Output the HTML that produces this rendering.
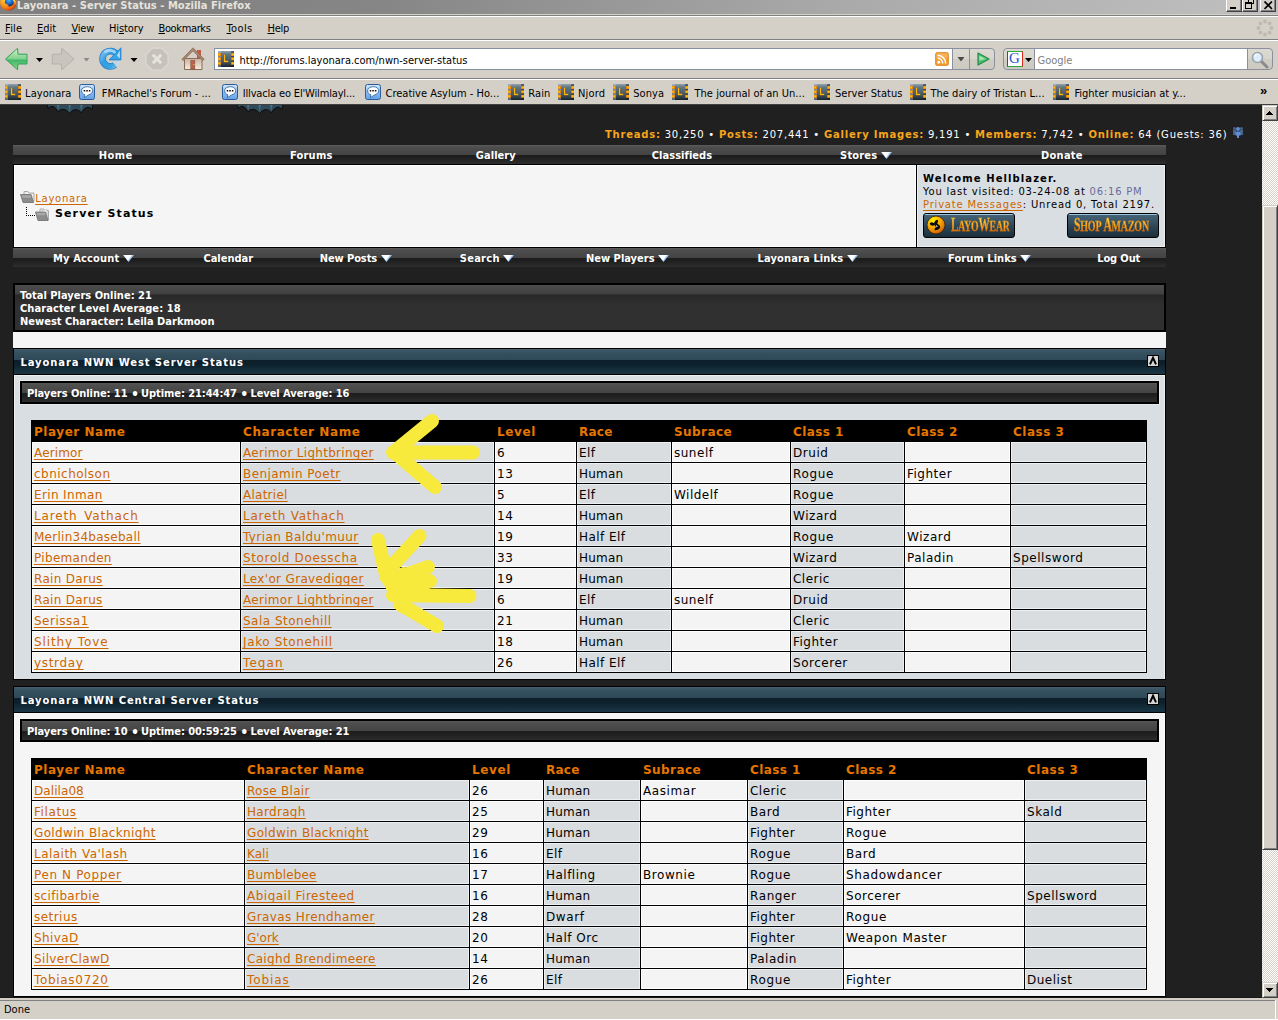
<!DOCTYPE html>
<html><head><meta charset="utf-8"><title>Layonara - Server Status - Mozilla Firefox</title>
<style>
*{box-sizing:border-box;margin:0;padding:0}
html,body{width:1278px;height:1020px;overflow:hidden;background:#d4d0c8}
body{position:relative;font-family:"DejaVu Sans","Liberation Sans",sans-serif;font-size:11px;color:#000}
.abs{position:absolute}
i{font-style:normal;display:block}
/* ---------- browser chrome ---------- */
#titlebar{left:0;top:0;width:1278px;height:14px;background:linear-gradient(90deg,#808080 0%,#868686 30%,#a9a9a9 65%,#c0c0c0 100%);overflow:hidden}
#titlebar span{position:absolute;left:17px;top:-1px;font:bold 11px "DejaVu Sans Condensed","Liberation Sans",sans-serif;color:#e6e3dc;letter-spacing:.05px;white-space:nowrap}
.ui{font-family:"DejaVu Sans Condensed","Liberation Sans",sans-serif;font-size:11px;color:#000;white-space:nowrap}
.hl{left:0;width:1278px;height:1px}
.menu{top:22px;line-height:13px}
.menu u{text-decoration:underline}
.bm{top:87px;line-height:13px}
.fav{width:16px;height:16px;top:84px}
#urlbar{left:214px;top:48px;width:739px;height:22px;background:#fff;border:1px solid #8790a0}
#page{left:0;top:105px;width:1262px;height:892px;background:#202020;overflow:hidden}
#status{left:0;top:998px;width:1278px;height:22px;background:#d4d0c8;border-bottom:1px solid #fff}
#scroll{left:1262px;top:105px;width:16px;height:893px;background:#e9e7e3;background-image:conic-gradient(#fff 25%,#d4d0c8 0 50%,#fff 0 75%,#d4d0c8 0);background-size:2px 2px}
.sbtn{left:0;width:16px;height:16px;background:#d4d0c8;border:1px solid;border-color:#d4d0c8 #404040 #404040 #d4d0c8;box-shadow:inset 1px 1px 0 #fff,inset -1px -1px 0 #808080}
.thumb{left:0;width:16px;background:#d4d0c8;border:1px solid;border-color:#d4d0c8 #404040 #404040 #d4d0c8;box-shadow:inset 1px 1px 0 #fff,inset -1px -1px 0 #808080}
.tri{position:absolute;left:4px;width:0;height:0;border-left:4px solid transparent;border-right:4px solid transparent}
.tri.up{top:5px;border-bottom:4px solid #000}
.tri.dn{top:6px;border-top:4px solid #000}
/* ---------- page ---------- */
.nav{left:13px;width:1153px;height:19px;background:linear-gradient(180deg,#5c5c5c 0,#4e4e4e 2px,#434343 10px,#1c1c1c 10px,#1f1f1f 13px,#2e2e2e 19px)}
.nav span{position:absolute;top:4px;font:bold 11px "DejaVu Sans Condensed","Liberation Sans",sans-serif;color:#fff;white-space:nowrap;line-height:13px}
.dd{display:inline-block;vertical-align:0}
.stats{font:10px "DejaVu Sans",sans-serif;color:#fff;white-space:nowrap}
.stats b{color:#f9a51b}
a{color:#cc6600;text-decoration:underline;text-decoration-thickness:1px;text-underline-offset:2px}
.shead{background:linear-gradient(180deg,#4d6573 0,#3e5868 1px,#35505f 4px,#2e4858 11px,#0b1e29 11px,#0e222e 16px,#16303f 22px,#1b3444 25px);border:1px solid #000}
.stitle{position:absolute;left:6.5px;top:7px;font:bold 10px "DejaVu Sans",sans-serif;letter-spacing:.9px;color:#fff;white-space:nowrap;line-height:13px}
.collapse{left:1133px;top:6px;width:12px;height:12px;background:#d6d6d6;border:1px solid #000}

.sbody{border:1px solid #000;border-top:0;box-shadow:inset 1px 1px 0 rgba(255,255,255,.5),inset -1px 0 0 rgba(255,255,255,.5)}
.subhead{border:2px solid #000;background:linear-gradient(180deg,#595959 0,#4e4e4e 2px,#444 10px,#1d1d1d 10px,#202020 13px,#2d2d2d 19px);box-shadow:0 0 0 1px rgba(255,255,255,.35)}
.subhead span{position:absolute;left:5px;top:4px;letter-spacing:-.03px;font:bold 11px "DejaVu Sans Condensed","Liberation Sans",sans-serif;color:#fff;white-space:nowrap;line-height:13px}
.dot{font-weight:bold}
.tbl{background:#000}
.th{height:20px;background:#000;color:#e67600;font:bold 12px "DejaVu Sans",sans-serif;padding:3px 0 0 2px;line-height:16px;white-space:nowrap;overflow:hidden}
.td{height:20px;font:12px "DejaVu Sans",sans-serif;padding:3px 0 0 2px;line-height:16px;white-space:nowrap;overflow:hidden;color:#000}
.a1{background:#f4f4f4;box-shadow:inset 0 0 0 1px #fff}
.a2{background:#d9dde0;box-shadow:inset 0 0 0 1px #edf0f3}
.wbtn{top:-3px;width:16px;height:15px;background:#d4d0c8;border:1px solid;border-color:#fff #404040 #404040 #fff;box-shadow:inset -1px -1px 0 #808080}
.lbtn{width:92px;height:25px;border:1px solid #000;border-radius:3px;background:linear-gradient(180deg,#9cc4e0 0,#9cc4e0 1px,#456275 1px,#3a5566 30%,#2a4252 60%,#1b303d 100%);overflow:hidden}
.fant{position:absolute;top:0px;font:bold 18px "Liberation Serif",serif;white-space:nowrap;line-height:22px;letter-spacing:-.3px;transform-origin:0 0;background:linear-gradient(180deg,#ffe25a 15%,#f9a81c 50%,#d96a06 85%);-webkit-background-clip:text;background-clip:text;color:transparent;-webkit-text-stroke:.3px #b8600a}
.fant small{font-size:15.5px}

</style></head><body>
<div id="titlebar" class="abs"><span>Layonara - Server Status - Mozilla Firefox</span>
<svg class="abs" style="left:0;top:-6px" width="17" height="17" viewBox="0 0 17 17"><radialGradient id="fx1" cx=".35" cy=".3" r=".8"><stop offset="0" stop-color="#ffd23a"/><stop offset=".5" stop-color="#fb9a1c"/><stop offset=".85" stop-color="#e4500e"/><stop offset="1" stop-color="#7a1c10"/></radialGradient><radialGradient id="fx2" cx=".45" cy=".3" r=".7"><stop offset="0" stop-color="#48b4f0"/><stop offset=".6" stop-color="#1a62c8"/><stop offset="1" stop-color="#08205c"/></radialGradient><circle cx="8.300" cy="8.500" r="8.200" fill="url(#fx1)"/><circle cx="9.300" cy="8" r="4.400" fill="url(#fx2)"/><path d="M3.500 9.500C5.500 9.200 7 9.800 9 11.200C7.600 11.300 7 11.800 6.800 12.600C5.200 12.400 4 11.400 3.500 9.500z" fill="#fb9a1c"/><path d="M12.800 4.500C15 5.500 16 8 15.600 10.500C15 8.500 14.200 7.500 13.300 7z" fill="#ffd23a"/></svg>
</div>
<div class="wbtn abs" style="left:1226px"><i class="abs" style="left:3px;top:9px;width:6px;height:2px;background:#000"></i></div>
<div class="wbtn abs" style="left:1242px"><i class="abs" style="left:5px;top:0px;width:6px;height:6px;border:1px solid #000;border-top-width:2px"></i><i class="abs" style="left:2px;top:4px;width:7px;height:7px;border:1px solid #000;border-top-width:2px;background:#d4d0c8"></i></div>
<div class="wbtn abs" style="left:1260px"><svg class="abs" style="left:3px;top:3px" width="9" height="9" viewBox="0 0 9 9"><path d="M0.500 0.500l7.500 7.500M8 0.500L0.500 8" stroke="#000" stroke-width="1.700"/></svg></div>
<i class="abs hl" style="top:15px;background:#808080"></i><i class="abs hl" style="top:16px;background:#fff"></i>
<i class="abs hl" style="top:39px;background:#808080"></i><i class="abs hl" style="top:40px;background:#fff"></i>
<i class="abs hl" style="top:78px;background:#808080"></i><i class="abs hl" style="top:79px;background:#fff"></i>
<i class="abs hl" style="top:104px;background:#404040"></i>
<span class="ui menu abs" style="left:5.1px;letter-spacing:0.129px"><u>F</u>ile</span>
<span class="ui menu abs" style="left:37.0px;letter-spacing:-0.043px"><u>E</u>dit</span>
<span class="ui menu abs" style="left:71.5px;letter-spacing:-0.242px"><u>V</u>iew</span>
<span class="ui menu abs" style="left:108.9px;letter-spacing:-0.1px">Hi<u>s</u>tory</span>
<span class="ui menu abs" style="left:158.5px;letter-spacing:-0.366px"><u>B</u>ookmarks</span>
<span class="ui menu abs" style="left:226.5px;letter-spacing:0.362px"><u>T</u>ools</span>
<span class="ui menu abs" style="left:267.5px;letter-spacing:-0.27px"><u>H</u>elp</span>
<svg class="abs" style="left:1256px;top:19px" width="18" height="18" viewBox="0 0 18 18"><g fill="#bdb9b1"><circle cx="15.50" cy="9.00" r="1.9"/><circle cx="13.60" cy="13.60" r="1.9"/><circle cx="9.00" cy="15.50" r="1.9"/><circle cx="4.40" cy="13.60" r="1.9"/><circle cx="2.50" cy="9.00" r="1.9"/><circle cx="4.40" cy="4.40" r="1.9"/><circle cx="9.00" cy="2.50" r="1.9"/><circle cx="13.60" cy="4.40" r="1.9"/></g></svg>
<svg class="abs" style="left:0;top:44px" width="212" height="30" viewBox="0 44 212 30">
<linearGradient id="gB" x1="0" y1="0" x2="0" y2="1"><stop offset="0" stop-color="#d5f3c8"/><stop offset=".5" stop-color="#7fd08a"/><stop offset=".55" stop-color="#3fb56c"/><stop offset="1" stop-color="#8fdc7a"/></linearGradient>
<linearGradient id="gR" x1="0" y1="0" x2="1" y2="1"><stop offset="0" stop-color="#9fd4f7"/><stop offset=".5" stop-color="#2f8fdc"/><stop offset="1" stop-color="#1e6fc4"/></linearGradient>
<linearGradient id="gH" x1="0" y1="0" x2="0" y2="1"><stop offset="0" stop-color="#c9b3a2"/><stop offset="1" stop-color="#f3ece2"/></linearGradient>
<path d="M5.500 59L17.500 48.300L18 54.200H27V64H18L17.500 69.700Z" fill="url(#gB)" stroke="#2ea25c" stroke-width="1" stroke-linejoin="round"/>
<path d="M36 58h7l-3.500 4z" fill="#000"/>
<path d="M74 59L61.800 48.300L61.300 54.200H52.300V64h9L61.800 69.700Z" fill="#c8c5be" stroke="#b4b1aa" stroke-width="1" stroke-linejoin="round"/>
<path d="M83.500 58h6l-3 3.500z" fill="#8a8a8a"/>
<linearGradient id="gR2" gradientUnits="userSpaceOnUse" x1="100" y1="52" x2="120" y2="68"><stop offset="0" stop-color="#8fcaf0"/><stop offset=".35" stop-color="#2f9fe2"/><stop offset=".7" stop-color="#3aa6e4"/><stop offset="1" stop-color="#cfe4ee" stop-opacity=".6"/></linearGradient>
<path d="M116.500 54.200A7.700 7.700 0 1 0 115 64.850" fill="none" stroke="#1f7bd0" stroke-width="6.800" opacity=".9"/>
<path d="M115 64.850A7.700 7.700 0 0 0 117.500 60.800" fill="none" stroke="#bcd9ea" stroke-width="6.400" opacity=".75"/>
<path d="M116.800 54.600A7.700 7.700 0 1 0 114.800 65" fill="none" stroke="url(#gR2)" stroke-width="5"/>
<path d="M104.500 52.500A7.700 7.700 0 0 1 116 53.500" fill="none" stroke="#b9e0f7" stroke-width="2.600" opacity=".8"/>
<path d="M120.900 47.800V59.900H109.100Z" fill="#36a6e6" stroke="#1f7bd0" stroke-width=".9" stroke-linejoin="round"/>
<path d="M119.800 50.800V58.600L117 55.500Z" fill="#c5e6f8" opacity=".9"/>
<path d="M130.500 58h7l-3.500 4z" fill="#000"/>
<path d="M152.400 48.200h9.200l6.400 6.400v9.200l-6.400 6.400h-9.200l-6.400-6.400v-9.200z" fill="#c5c2bb" stroke="#dddad3" stroke-width="1.200"/>
<path d="M152.800 54.800l8.400 8.400M161.200 54.800l-8.400 8.400" stroke="#e6e3dc" stroke-width="3"/>
<rect x="197" y="50" width="4" height="8" fill="#c45a43"/>
<path d="M184.500 58.500h17.500v11H184.500z" fill="url(#gH)" stroke="#8a6a50" stroke-width="1"/>
<path d="M193 47.800L181.800 59.300L183.300 60.500L193 50.800L202.700 60.500L204.200 59.300Z" fill="#a88874" stroke="#8b6b57" stroke-width=".8" stroke-linejoin="round"/>
<rect x="190.800" y="60.500" width="4" height="8.500" fill="#b8634b" stroke="#8e4a38" stroke-width=".6"/>
<rect x="193.500" y="64" width="1" height="1" fill="#e8e84a"/>
</svg>
<div id="urlbar" class="abs"><span class="ui abs" style="left:24.500px;top:5px;line-height:13px;letter-spacing:0.006px">http://forums.layonara.com/nwn-server-status</span></div>
<svg class="abs" style="left:218px;top:51px" width="16" height="16" viewBox="0 0 16 16"><linearGradient id="fv1" x1="0" y1="0" x2="0" y2="1"><stop offset="0" stop-color="#93a2ad"/><stop offset=".2" stop-color="#647582"/><stop offset=".7" stop-color="#44545f"/><stop offset="1" stop-color="#17232d"/></linearGradient><rect x="0" y="0" width="16" height="16" fill="url(#fv1)"/><rect x="13" y="0" width="3" height="16" fill="#101a24" opacity=".45"/><rect x="0" y="0" width="3" height="16" fill="#c5d6e2" opacity=".35"/><path d="M6.800 4v7h3.400" fill="none" stroke="#1c2a38" stroke-width="2.600" opacity=".5"/><path d="M6.600 3.800v6.800h3.600" fill="none" stroke="#ffb606" stroke-width="1.500"/><rect x="0" y="2" width="3" height="3" fill="#e07a08"/><rect x="0.2" y="2.6" width="2" height="1.800" fill="#ffc40a"/><rect x="0" y="6.3" width="3" height="3" fill="#e07a08"/><rect x="0.2" y="6.8999999999999995" width="2" height="1.800" fill="#ffc40a"/><rect x="0" y="10.8" width="3" height="3" fill="#e07a08"/><rect x="0.2" y="11.4" width="2" height="1.800" fill="#ffc40a"/><rect x="13" y="2" width="3" height="3" fill="#e07a08"/><rect x="13.8" y="2.6" width="2" height="1.800" fill="#ffc40a"/><rect x="13" y="6.3" width="3" height="3" fill="#e07a08"/><rect x="13.8" y="6.8999999999999995" width="2" height="1.800" fill="#ffc40a"/><rect x="13" y="10.8" width="3" height="3" fill="#e07a08"/><rect x="13.8" y="11.4" width="2" height="1.800" fill="#ffc40a"/></svg>
<svg class="abs" style="left:935px;top:52px" width="14" height="14" viewBox="0 0 16 16"><rect x=".5" y=".5" width="15" height="15" rx="2.500" fill="#f39a2c" stroke="#e08a2a"/><rect x="1.500" y="1.500" width="13" height="6" rx="2" fill="#f9b868" opacity=".7"/><circle cx="4.300" cy="11.700" r="1.600" fill="#fff"/><path d="M3 7.200a5.800 5.800 0 0 1 5.800 5.800M3 3.800A9.200 9.200 0 0 1 12.200 13" fill="none" stroke="#fff" stroke-width="1.800"/></svg>
<div class="abs" style="left:952px;top:48px;width:18px;height:22px;border:1px solid #8a90a0;background:linear-gradient(180deg,#dcd9d1 0,#d8d5cd 50%,#cfccc4 50%,#cdcac2 100%)"></div>
<svg class="abs" style="left:957px;top:57px" width="8" height="5" viewBox="0 0 8 5"><path d="M0.500 0h7L4 4.600z" fill="#4a4a4a"/></svg>
<div class="abs" style="left:969px;top:48px;width:26px;height:22px;border:1px solid #8a90a0;border-radius:0 4px 4px 0;background:linear-gradient(180deg,#dcd9d1 0,#d8d5cd 50%,#cfccc4 50%,#cdcac2 100%)"></div>
<svg class="abs" style="left:976px;top:52px" width="14" height="14" viewBox="0 0 14 14"><path d="M2 1L13 7L2 13Z" fill="#4fbf70" stroke="#1f8f45" stroke-width="1.200" stroke-linejoin="round"/><path d="M3.300 3.500L9.800 7L3.300 8.500z" fill="#a5e5b0"/></svg>
<div class="abs" style="left:1003px;top:48px;width:270px;height:22px;border:1px solid #8a90a0;border-radius:4px;background:linear-gradient(180deg,#dcd9d1 0,#d8d5cd 50%,#cfccc4 50%,#cdcac2 100%)"></div>
<div class="abs" style="left:1034px;top:48px;width:214px;height:22px;border:1px solid #8a90a0;background:#fff"><span class="ui abs" style="left:2.500px;top:5px;line-height:13px;color:#808080">Google</span></div>
<div class="abs" style="left:1007px;top:51px;width:16px;height:16px;background:#fff;border:1px solid;border-color:#2fa83a #d8281e #2fa83a #2448d8"><span class="abs" style="left:1px;top:-2px;font:15px 'Liberation Serif',serif;color:#2a4fd0;line-height:16px">G</span></div>
<svg class="abs" style="left:1025px;top:58px" width="7" height="4" viewBox="0 0 7 4"><path d="M0 0h7L3.500 4z" fill="#000"/></svg>
<svg class="abs" style="left:1251px;top:51px" width="18" height="18" viewBox="0 0 18 18"><path d="M10 10l6 6" stroke="#8a8a8a" stroke-width="3" stroke-linecap="round"/><circle cx="6.500" cy="6.500" r="5" fill="#dfeefa" stroke="#9aa4ae" stroke-width="1.600"/><path d="M3.500 5.500a3.500 3.500 0 0 1 3-2.500" stroke="#fff" stroke-width="1.200" fill="none"/></svg>
<svg class="abs" style="left:5px;top:84px" width="16" height="16" viewBox="0 0 16 16"><linearGradient id="fv2" x1="0" y1="0" x2="0" y2="1"><stop offset="0" stop-color="#93a2ad"/><stop offset=".2" stop-color="#647582"/><stop offset=".7" stop-color="#44545f"/><stop offset="1" stop-color="#17232d"/></linearGradient><rect x="0" y="0" width="16" height="16" fill="url(#fv2)"/><rect x="13" y="0" width="3" height="16" fill="#101a24" opacity=".45"/><rect x="0" y="0" width="3" height="16" fill="#c5d6e2" opacity=".35"/><path d="M6.800 4v7h3.400" fill="none" stroke="#1c2a38" stroke-width="2.600" opacity=".5"/><path d="M6.600 3.800v6.800h3.600" fill="none" stroke="#ffb606" stroke-width="1.500"/><rect x="0" y="2" width="3" height="3" fill="#e07a08"/><rect x="0.2" y="2.6" width="2" height="1.800" fill="#ffc40a"/><rect x="0" y="6.3" width="3" height="3" fill="#e07a08"/><rect x="0.2" y="6.8999999999999995" width="2" height="1.800" fill="#ffc40a"/><rect x="0" y="10.8" width="3" height="3" fill="#e07a08"/><rect x="0.2" y="11.4" width="2" height="1.800" fill="#ffc40a"/><rect x="13" y="2" width="3" height="3" fill="#e07a08"/><rect x="13.8" y="2.6" width="2" height="1.800" fill="#ffc40a"/><rect x="13" y="6.3" width="3" height="3" fill="#e07a08"/><rect x="13.8" y="6.8999999999999995" width="2" height="1.800" fill="#ffc40a"/><rect x="13" y="10.8" width="3" height="3" fill="#e07a08"/><rect x="13.8" y="11.4" width="2" height="1.800" fill="#ffc40a"/></svg>
<span class="ui bm abs" style="left:25.1px;letter-spacing:0.056px">Layonara</span>
<svg class="abs" style="left:79px;top:84px" width="16" height="16" viewBox="0 0 16 16"><linearGradient id="bb1" x1="0" y1="0" x2="0" y2="1"><stop offset="0" stop-color="#d4e8fb"/><stop offset=".45" stop-color="#8fc0f2"/><stop offset="1" stop-color="#62a2e8"/></linearGradient><rect x="0.500" y="0.500" width="15" height="15" rx="2" fill="url(#bb1)" stroke="#2a5c98"/><path d="M8.300 2.700c3.200 0 5.400 1.800 5.400 4.100 0 1.900-1.700 3.400-4.300 4.200L5.300 13.700l.6-2.900C3.700 10.100 2.600 8.600 2.600 6.800c0-2.300 2.400-4.100 5.700-4.100z" fill="#fff" stroke="#2a5c98" stroke-width=".8"/><g fill="#0a0a0a"><rect x="4.600" y="6.100" width="1.700" height="1.500" rx=".5"/><rect x="7.200" y="6.100" width="1.700" height="1.500" rx=".5"/><rect x="9.800" y="6.100" width="1.700" height="1.500" rx=".5"/></g></svg>
<span class="ui bm abs" style="left:101.8px;letter-spacing:-0.006px">FMRachel's Forum - ...</span>
<svg class="abs" style="left:222px;top:84px" width="16" height="16" viewBox="0 0 16 16"><linearGradient id="bb2" x1="0" y1="0" x2="0" y2="1"><stop offset="0" stop-color="#d4e8fb"/><stop offset=".45" stop-color="#8fc0f2"/><stop offset="1" stop-color="#62a2e8"/></linearGradient><rect x="0.500" y="0.500" width="15" height="15" rx="2" fill="url(#bb2)" stroke="#2a5c98"/><path d="M8.300 2.700c3.200 0 5.400 1.800 5.400 4.100 0 1.900-1.700 3.400-4.300 4.200L5.300 13.700l.6-2.900C3.700 10.100 2.600 8.600 2.600 6.800c0-2.300 2.400-4.100 5.700-4.100z" fill="#fff" stroke="#2a5c98" stroke-width=".8"/><g fill="#0a0a0a"><rect x="4.600" y="6.100" width="1.700" height="1.500" rx=".5"/><rect x="7.200" y="6.100" width="1.700" height="1.500" rx=".5"/><rect x="9.800" y="6.100" width="1.700" height="1.500" rx=".5"/></g></svg>
<span class="ui bm abs" style="left:242.7px;letter-spacing:-0.157px">Illvacla eo El'Wilmlayl...</span>
<svg class="abs" style="left:365px;top:84px" width="16" height="16" viewBox="0 0 16 16"><linearGradient id="bb3" x1="0" y1="0" x2="0" y2="1"><stop offset="0" stop-color="#d4e8fb"/><stop offset=".45" stop-color="#8fc0f2"/><stop offset="1" stop-color="#62a2e8"/></linearGradient><rect x="0.500" y="0.500" width="15" height="15" rx="2" fill="url(#bb3)" stroke="#2a5c98"/><path d="M8.300 2.700c3.200 0 5.400 1.800 5.400 4.100 0 1.900-1.700 3.400-4.300 4.200L5.300 13.700l.6-2.900C3.700 10.100 2.600 8.600 2.600 6.800c0-2.300 2.400-4.100 5.700-4.100z" fill="#fff" stroke="#2a5c98" stroke-width=".8"/><g fill="#0a0a0a"><rect x="4.600" y="6.100" width="1.700" height="1.500" rx=".5"/><rect x="7.200" y="6.100" width="1.700" height="1.500" rx=".5"/><rect x="9.800" y="6.100" width="1.700" height="1.500" rx=".5"/></g></svg>
<span class="ui bm abs" style="left:385.5px;letter-spacing:0.007px">Creative Asylum - Ho...</span>
<svg class="abs" style="left:508px;top:84px" width="16" height="16" viewBox="0 0 16 16"><linearGradient id="fv3" x1="0" y1="0" x2="0" y2="1"><stop offset="0" stop-color="#93a2ad"/><stop offset=".2" stop-color="#647582"/><stop offset=".7" stop-color="#44545f"/><stop offset="1" stop-color="#17232d"/></linearGradient><rect x="0" y="0" width="16" height="16" fill="url(#fv3)"/><rect x="13" y="0" width="3" height="16" fill="#101a24" opacity=".45"/><rect x="0" y="0" width="3" height="16" fill="#c5d6e2" opacity=".35"/><path d="M6.800 4v7h3.400" fill="none" stroke="#1c2a38" stroke-width="2.600" opacity=".5"/><path d="M6.600 3.800v6.800h3.600" fill="none" stroke="#ffb606" stroke-width="1.500"/><rect x="0" y="2" width="3" height="3" fill="#e07a08"/><rect x="0.2" y="2.6" width="2" height="1.800" fill="#ffc40a"/><rect x="0" y="6.3" width="3" height="3" fill="#e07a08"/><rect x="0.2" y="6.8999999999999995" width="2" height="1.800" fill="#ffc40a"/><rect x="0" y="10.8" width="3" height="3" fill="#e07a08"/><rect x="0.2" y="11.4" width="2" height="1.800" fill="#ffc40a"/><rect x="13" y="2" width="3" height="3" fill="#e07a08"/><rect x="13.8" y="2.6" width="2" height="1.800" fill="#ffc40a"/><rect x="13" y="6.3" width="3" height="3" fill="#e07a08"/><rect x="13.8" y="6.8999999999999995" width="2" height="1.800" fill="#ffc40a"/><rect x="13" y="10.8" width="3" height="3" fill="#e07a08"/><rect x="13.8" y="11.4" width="2" height="1.800" fill="#ffc40a"/></svg>
<span class="ui bm abs" style="left:528.2px;letter-spacing:0.141px">Rain</span>
<svg class="abs" style="left:558px;top:84px" width="16" height="16" viewBox="0 0 16 16"><linearGradient id="fv4" x1="0" y1="0" x2="0" y2="1"><stop offset="0" stop-color="#93a2ad"/><stop offset=".2" stop-color="#647582"/><stop offset=".7" stop-color="#44545f"/><stop offset="1" stop-color="#17232d"/></linearGradient><rect x="0" y="0" width="16" height="16" fill="url(#fv4)"/><rect x="13" y="0" width="3" height="16" fill="#101a24" opacity=".45"/><rect x="0" y="0" width="3" height="16" fill="#c5d6e2" opacity=".35"/><path d="M6.800 4v7h3.400" fill="none" stroke="#1c2a38" stroke-width="2.600" opacity=".5"/><path d="M6.600 3.800v6.800h3.600" fill="none" stroke="#ffb606" stroke-width="1.500"/><rect x="0" y="2" width="3" height="3" fill="#e07a08"/><rect x="0.2" y="2.6" width="2" height="1.800" fill="#ffc40a"/><rect x="0" y="6.3" width="3" height="3" fill="#e07a08"/><rect x="0.2" y="6.8999999999999995" width="2" height="1.800" fill="#ffc40a"/><rect x="0" y="10.8" width="3" height="3" fill="#e07a08"/><rect x="0.2" y="11.4" width="2" height="1.800" fill="#ffc40a"/><rect x="13" y="2" width="3" height="3" fill="#e07a08"/><rect x="13.8" y="2.6" width="2" height="1.800" fill="#ffc40a"/><rect x="13" y="6.3" width="3" height="3" fill="#e07a08"/><rect x="13.8" y="6.8999999999999995" width="2" height="1.800" fill="#ffc40a"/><rect x="13" y="10.8" width="3" height="3" fill="#e07a08"/><rect x="13.8" y="11.4" width="2" height="1.800" fill="#ffc40a"/></svg>
<span class="ui bm abs" style="left:578.0px;letter-spacing:0.185px">Njord</span>
<svg class="abs" style="left:613px;top:84px" width="16" height="16" viewBox="0 0 16 16"><linearGradient id="fv5" x1="0" y1="0" x2="0" y2="1"><stop offset="0" stop-color="#93a2ad"/><stop offset=".2" stop-color="#647582"/><stop offset=".7" stop-color="#44545f"/><stop offset="1" stop-color="#17232d"/></linearGradient><rect x="0" y="0" width="16" height="16" fill="url(#fv5)"/><rect x="13" y="0" width="3" height="16" fill="#101a24" opacity=".45"/><rect x="0" y="0" width="3" height="16" fill="#c5d6e2" opacity=".35"/><path d="M6.800 4v7h3.400" fill="none" stroke="#1c2a38" stroke-width="2.600" opacity=".5"/><path d="M6.600 3.800v6.800h3.600" fill="none" stroke="#ffb606" stroke-width="1.500"/><rect x="0" y="2" width="3" height="3" fill="#e07a08"/><rect x="0.2" y="2.6" width="2" height="1.800" fill="#ffc40a"/><rect x="0" y="6.3" width="3" height="3" fill="#e07a08"/><rect x="0.2" y="6.8999999999999995" width="2" height="1.800" fill="#ffc40a"/><rect x="0" y="10.8" width="3" height="3" fill="#e07a08"/><rect x="0.2" y="11.4" width="2" height="1.800" fill="#ffc40a"/><rect x="13" y="2" width="3" height="3" fill="#e07a08"/><rect x="13.8" y="2.6" width="2" height="1.800" fill="#ffc40a"/><rect x="13" y="6.3" width="3" height="3" fill="#e07a08"/><rect x="13.8" y="6.8999999999999995" width="2" height="1.800" fill="#ffc40a"/><rect x="13" y="10.8" width="3" height="3" fill="#e07a08"/><rect x="13.8" y="11.4" width="2" height="1.800" fill="#ffc40a"/></svg>
<span class="ui bm abs" style="left:633.2px;letter-spacing:0.074px">Sonya</span>
<svg class="abs" style="left:672px;top:84px" width="16" height="16" viewBox="0 0 16 16"><linearGradient id="fv6" x1="0" y1="0" x2="0" y2="1"><stop offset="0" stop-color="#93a2ad"/><stop offset=".2" stop-color="#647582"/><stop offset=".7" stop-color="#44545f"/><stop offset="1" stop-color="#17232d"/></linearGradient><rect x="0" y="0" width="16" height="16" fill="url(#fv6)"/><rect x="13" y="0" width="3" height="16" fill="#101a24" opacity=".45"/><rect x="0" y="0" width="3" height="16" fill="#c5d6e2" opacity=".35"/><path d="M6.800 4v7h3.400" fill="none" stroke="#1c2a38" stroke-width="2.600" opacity=".5"/><path d="M6.600 3.800v6.800h3.600" fill="none" stroke="#ffb606" stroke-width="1.500"/><rect x="0" y="2" width="3" height="3" fill="#e07a08"/><rect x="0.2" y="2.6" width="2" height="1.800" fill="#ffc40a"/><rect x="0" y="6.3" width="3" height="3" fill="#e07a08"/><rect x="0.2" y="6.8999999999999995" width="2" height="1.800" fill="#ffc40a"/><rect x="0" y="10.8" width="3" height="3" fill="#e07a08"/><rect x="0.2" y="11.4" width="2" height="1.800" fill="#ffc40a"/><rect x="13" y="2" width="3" height="3" fill="#e07a08"/><rect x="13.8" y="2.6" width="2" height="1.800" fill="#ffc40a"/><rect x="13" y="6.3" width="3" height="3" fill="#e07a08"/><rect x="13.8" y="6.8999999999999995" width="2" height="1.800" fill="#ffc40a"/><rect x="13" y="10.8" width="3" height="3" fill="#e07a08"/><rect x="13.8" y="11.4" width="2" height="1.800" fill="#ffc40a"/></svg>
<span class="ui bm abs" style="left:694.5px;letter-spacing:0.021px">The journal of an Un...</span>
<svg class="abs" style="left:814px;top:84px" width="16" height="16" viewBox="0 0 16 16"><linearGradient id="fv7" x1="0" y1="0" x2="0" y2="1"><stop offset="0" stop-color="#93a2ad"/><stop offset=".2" stop-color="#647582"/><stop offset=".7" stop-color="#44545f"/><stop offset="1" stop-color="#17232d"/></linearGradient><rect x="0" y="0" width="16" height="16" fill="url(#fv7)"/><rect x="13" y="0" width="3" height="16" fill="#101a24" opacity=".45"/><rect x="0" y="0" width="3" height="16" fill="#c5d6e2" opacity=".35"/><path d="M6.800 4v7h3.400" fill="none" stroke="#1c2a38" stroke-width="2.600" opacity=".5"/><path d="M6.600 3.800v6.800h3.600" fill="none" stroke="#ffb606" stroke-width="1.500"/><rect x="0" y="2" width="3" height="3" fill="#e07a08"/><rect x="0.2" y="2.6" width="2" height="1.800" fill="#ffc40a"/><rect x="0" y="6.3" width="3" height="3" fill="#e07a08"/><rect x="0.2" y="6.8999999999999995" width="2" height="1.800" fill="#ffc40a"/><rect x="0" y="10.8" width="3" height="3" fill="#e07a08"/><rect x="0.2" y="11.4" width="2" height="1.800" fill="#ffc40a"/><rect x="13" y="2" width="3" height="3" fill="#e07a08"/><rect x="13.8" y="2.6" width="2" height="1.800" fill="#ffc40a"/><rect x="13" y="6.3" width="3" height="3" fill="#e07a08"/><rect x="13.8" y="6.8999999999999995" width="2" height="1.800" fill="#ffc40a"/><rect x="13" y="10.8" width="3" height="3" fill="#e07a08"/><rect x="13.8" y="11.4" width="2" height="1.800" fill="#ffc40a"/></svg>
<span class="ui bm abs" style="left:835.0px;letter-spacing:0.028px">Server Status</span>
<svg class="abs" style="left:910px;top:84px" width="16" height="16" viewBox="0 0 16 16"><linearGradient id="fv8" x1="0" y1="0" x2="0" y2="1"><stop offset="0" stop-color="#93a2ad"/><stop offset=".2" stop-color="#647582"/><stop offset=".7" stop-color="#44545f"/><stop offset="1" stop-color="#17232d"/></linearGradient><rect x="0" y="0" width="16" height="16" fill="url(#fv8)"/><rect x="13" y="0" width="3" height="16" fill="#101a24" opacity=".45"/><rect x="0" y="0" width="3" height="16" fill="#c5d6e2" opacity=".35"/><path d="M6.800 4v7h3.400" fill="none" stroke="#1c2a38" stroke-width="2.600" opacity=".5"/><path d="M6.600 3.800v6.800h3.600" fill="none" stroke="#ffb606" stroke-width="1.500"/><rect x="0" y="2" width="3" height="3" fill="#e07a08"/><rect x="0.2" y="2.6" width="2" height="1.800" fill="#ffc40a"/><rect x="0" y="6.3" width="3" height="3" fill="#e07a08"/><rect x="0.2" y="6.8999999999999995" width="2" height="1.800" fill="#ffc40a"/><rect x="0" y="10.8" width="3" height="3" fill="#e07a08"/><rect x="0.2" y="11.4" width="2" height="1.800" fill="#ffc40a"/><rect x="13" y="2" width="3" height="3" fill="#e07a08"/><rect x="13.8" y="2.6" width="2" height="1.800" fill="#ffc40a"/><rect x="13" y="6.3" width="3" height="3" fill="#e07a08"/><rect x="13.8" y="6.8999999999999995" width="2" height="1.800" fill="#ffc40a"/><rect x="13" y="10.8" width="3" height="3" fill="#e07a08"/><rect x="13.8" y="11.4" width="2" height="1.800" fill="#ffc40a"/></svg>
<span class="ui bm abs" style="left:930.4px;letter-spacing:0.045px">The dairy of Tristan L...</span>
<svg class="abs" style="left:1053px;top:84px" width="16" height="16" viewBox="0 0 16 16"><linearGradient id="fv9" x1="0" y1="0" x2="0" y2="1"><stop offset="0" stop-color="#93a2ad"/><stop offset=".2" stop-color="#647582"/><stop offset=".7" stop-color="#44545f"/><stop offset="1" stop-color="#17232d"/></linearGradient><rect x="0" y="0" width="16" height="16" fill="url(#fv9)"/><rect x="13" y="0" width="3" height="16" fill="#101a24" opacity=".45"/><rect x="0" y="0" width="3" height="16" fill="#c5d6e2" opacity=".35"/><path d="M6.800 4v7h3.400" fill="none" stroke="#1c2a38" stroke-width="2.600" opacity=".5"/><path d="M6.600 3.800v6.800h3.600" fill="none" stroke="#ffb606" stroke-width="1.500"/><rect x="0" y="2" width="3" height="3" fill="#e07a08"/><rect x="0.2" y="2.6" width="2" height="1.800" fill="#ffc40a"/><rect x="0" y="6.3" width="3" height="3" fill="#e07a08"/><rect x="0.2" y="6.8999999999999995" width="2" height="1.800" fill="#ffc40a"/><rect x="0" y="10.8" width="3" height="3" fill="#e07a08"/><rect x="0.2" y="11.4" width="2" height="1.800" fill="#ffc40a"/><rect x="13" y="2" width="3" height="3" fill="#e07a08"/><rect x="13.8" y="2.6" width="2" height="1.800" fill="#ffc40a"/><rect x="13" y="6.3" width="3" height="3" fill="#e07a08"/><rect x="13.8" y="6.8999999999999995" width="2" height="1.800" fill="#ffc40a"/><rect x="13" y="10.8" width="3" height="3" fill="#e07a08"/><rect x="13.8" y="11.4" width="2" height="1.800" fill="#ffc40a"/></svg>
<span class="ui bm abs" style="left:1074.4px;letter-spacing:-0.007px">Fighter musician at y...</span>
<span class="abs" style="left:1260px;top:84px;font:bold 13px 'Liberation Sans',sans-serif;line-height:14px;letter-spacing:-1px">»</span>
<div id="page" class="abs">
<svg class="abs" style="left:47px;top:0" width="47" height="10" viewBox="47 105 47 10"><path d="M47.500 104.500H93L92 109.500Q87 103.500 81.300 112.700Q75.500 106 69.600 113.600Q64 106 58 111.700Q53 103 48 108.500Z" fill="#2f4a5a" stroke="#06090b" stroke-width=".9"/><path d="M57 105l1 5.500 1.500-5.500zM68.500 105l1 7 1.500-7zM80 105l1.300 6 1.200-6z" fill="#4d6c7d"/></svg>
<svg class="abs" style="left:236.5px;top:0" width="47" height="10" viewBox="47 105 47 10"><path d="M47.500 104.500H93L92 109.500Q87 103.500 81.300 112.700Q75.500 106 69.600 113.600Q64 106 58 111.700Q53 103 48 108.500Z" fill="#2f4a5a" stroke="#06090b" stroke-width=".9"/><path d="M57 105l1 5.500 1.500-5.500zM68.500 105l1 7 1.500-7zM80 105l1.300 6 1.200-6z" fill="#4d6c7d"/></svg>
<div class="abs stats" style="left:605px;top:23px;line-height:13px;letter-spacing:0.78px"><b>Threads:</b> 30,250 • <b>Posts:</b> 207,441 • <b>Gallery Images:</b> 9,191 • <b>Members:</b> 7,742 • <b>Online:</b> 64 (Guests: 36)</div>
<svg class="abs" style="left:1232px;top:21px" width="12" height="12" viewBox="0 0 12 12"><g fill="#46648c"><circle cx="2.500" cy="2.500" r="1.500"/><rect x="1" y="4" width="3" height="5"/><circle cx="9.500" cy="2.500" r="1.500"/><rect x="8" y="4" width="3" height="5"/></g><g fill="#5d8fd6"><circle cx="6" cy="3" r="2"/><path d="M3.500 5.500h5v4h-1.500v2.500h-2v-2.500h-1.500z"/></g></svg>
<div class="abs nav" style="top:40px"><span style="left:85.7px;letter-spacing:0.473px">Home</span><span style="left:276.9px;letter-spacing:0.242px">Forums</span><span style="left:462.8px;letter-spacing:0.054px">Gallery</span><span style="left:638.8px;letter-spacing:0.043px">Classifieds</span><span style="left:827.1px;letter-spacing:0.174px">Stores<svg class="dd" style="margin-left:3.33px" width="11" height="7" viewBox="0 0 11 7"><path d="M0 0h11L5.500 7z" fill="#9cc8f4"/><path d="M0.500 0h8.500L5 5.800z" fill="#fff"/></svg></span><span style="left:1028.1px;letter-spacing:0.252px">Donate</span></div>
<div class="abs" style="left:13px;top:59px;width:1153px;height:84px;background:#000"></div>
<div class="abs" style="left:14px;top:60px;width:902px;height:82px;background:#f5f5f5;box-shadow:inset 0 0 0 1px #fff"></div>
<div class="abs" style="left:917px;top:60px;width:248px;height:82px;background:#d9dee2;box-shadow:inset 0 0 0 1px #eceff1"></div>
<svg class="abs" style="left:20px;top:85px" width="15" height="13" viewBox="0 0 15 13"><path d="M4 1.500h4l1 1.500h5v8h-10z" fill="#ececec" stroke="#9a9a9a" stroke-width=".8"/><path d="M0.500 4.500h10.500l2.500 8h-10.500z" fill="#8c8c8c" stroke="#6e6e6e" stroke-width=".8"/><path d="M1.500 5.300h9l.8 2.500h-9z" fill="#a8a8a8"/></svg>
<a class="abs" style="left:35.200px;top:87px;font:10px 'DejaVu Sans',sans-serif;line-height:13px;letter-spacing:0.756px;white-space:nowrap">Layonara</a>
<i class="abs" style="left:26px;top:102px;width:9px;height:9px;border-left:1px dotted #000;border-bottom:1px dotted #000"></i>
<svg class="abs" style="left:35px;top:103px" width="15" height="13" viewBox="0 0 15 13"><path d="M5 1h3.500l.8 1.500h4.200v9.500h-8.500z" fill="#f0f0f0" stroke="#9a9a9a" stroke-width=".8"/><path d="M7 2.500l5 -1v10l-5 1z" fill="#fafafa" stroke="#aaa" stroke-width=".6"/><path d="M0.500 4h10l2.500 8.500h-10z" fill="#8c8c8c" stroke="#6e6e6e" stroke-width=".8"/><path d="M1.500 4.800h8.500l.8 2.500h-8.500z" fill="#a8a8a8"/></svg>
<span class="abs" style="left:55px;top:102px;font:bold 11px 'DejaVu Sans',sans-serif;line-height:14px;letter-spacing:1.12px;white-space:nowrap;color:#000">Server Status</span>
<span class="abs" style="left:923px;top:67px;font:bold 10px 'DejaVu Sans',sans-serif;line-height:13px;letter-spacing:1.099px;white-space:nowrap">Welcome Hellblazer.</span>
<span class="abs" style="left:923px;top:80px;font:10px 'DejaVu Sans',sans-serif;line-height:13px;letter-spacing:0.783px;white-space:nowrap">You last visited: 03-24-08 at <span style="color:#6b6b99">06:16 PM</span></span>
<span class="abs" style="left:923px;top:93px;font:10px 'DejaVu Sans',sans-serif;line-height:13px;letter-spacing:0.798px;white-space:nowrap"><a>Private Messages</a>: Unread 0, Total 2197.</span>
<div class="abs lbtn" style="left:923px;top:108px"><svg class="abs" style="left:2px;top:1.300px" width="20" height="20" viewBox="-1 -1 20 20"><radialGradient id="gO" cx=".35" cy=".25" r=".8"><stop offset="0" stop-color="#fff200"/><stop offset=".45" stop-color="#fbb000"/><stop offset=".8" stop-color="#e07a08"/><stop offset="1" stop-color="#b85408"/></radialGradient><circle cx="9" cy="9" r="9" fill="url(#gO)" stroke="#3a2206" stroke-width=".8"/><path d="M2.700 7.300L4.500 6.200L7 7L8.500 4.500L10.500 3.800L11.200 5L10.300 7.500L12.800 9.800L13.300 11.500L11.800 13.300L8.200 14.500L7.300 13L9 11.300L7.800 9.200L5.200 9.800L3.500 9z" fill="#0c0a08"/><path d="M8.800 8.500L10.800 10.800L9.600 11.200z" fill="#fff"/></svg><span class="fant" style="left:26.500px;transform:scaleX(.627)">L<small>AYO</small>W<small>EAR</small></span></div>
<div class="abs lbtn" style="left:1067px;top:108px"><span class="fant" style="left:6.200px;transform:scaleX(.645)">S<small>HOP</small> A<small>MAZON</small></span></div>
<div class="abs nav" style="top:143px"><span style="left:40.0px;letter-spacing:0.163px">My Account<svg class="dd" style="margin-left:3.34px" width="11" height="7" viewBox="0 0 11 7"><path d="M0 0h11L5.500 7z" fill="#9cc8f4"/><path d="M0.500 0h8.500L5 5.800z" fill="#fff"/></svg></span><span style="left:190.4px;letter-spacing:0.008px">Calendar</span><span style="left:306.8px;letter-spacing:-0.095px">New Posts<svg class="dd" style="margin-left:3.60px" width="11" height="7" viewBox="0 0 11 7"><path d="M0 0h11L5.500 7z" fill="#9cc8f4"/><path d="M0.500 0h8.500L5 5.800z" fill="#fff"/></svg></span><span style="left:446.8px;letter-spacing:0.265px">Search<svg class="dd" style="margin-left:3.23px" width="11" height="7" viewBox="0 0 11 7"><path d="M0 0h11L5.500 7z" fill="#9cc8f4"/><path d="M0.500 0h8.500L5 5.800z" fill="#fff"/></svg></span><span style="left:573.0px;letter-spacing:0.009px">New Players<svg class="dd" style="margin-left:3.49px" width="11" height="7" viewBox="0 0 11 7"><path d="M0 0h11L5.500 7z" fill="#9cc8f4"/><path d="M0.500 0h8.500L5 5.800z" fill="#fff"/></svg></span><span style="left:744.6px;letter-spacing:0.133px">Layonara Links<svg class="dd" style="margin-left:3.37px" width="11" height="7" viewBox="0 0 11 7"><path d="M0 0h11L5.500 7z" fill="#9cc8f4"/><path d="M0.500 0h8.500L5 5.800z" fill="#fff"/></svg></span><span style="left:935.1px;letter-spacing:0.062px">Forum Links<svg class="dd" style="margin-left:3.44px" width="11" height="7" viewBox="0 0 11 7"><path d="M0 0h11L5.500 7z" fill="#9cc8f4"/><path d="M0.500 0h8.500L5 5.800z" fill="#fff"/></svg></span><span style="left:1084.2px;letter-spacing:-0.118px">Log Out</span></div>
<div class="abs" style="left:13px;top:178px;width:1153px;height:49px;background:#000"></div>
<div class="abs" style="left:15px;top:180px;width:1149px;height:45px;background:linear-gradient(180deg,#4c4c4c 0,#484848 3px,#414141 9px,#272727 10px,#2a2a2a 13px,#303030 20px)"></div>
<div class="abs" style="left:20px;top:184px;font:bold 11px 'DejaVu Sans Condensed',sans-serif;color:#fff;line-height:13px;white-space:nowrap"><span style="letter-spacing:-0.003px">Total Players Online: 21</span><br><span style="letter-spacing:0.094px">Character Level Average: 18</span><br><span style="letter-spacing:0.006px">Newest Character: Leila Darkmoon</span></div>
<div class="abs" style="left:13px;top:227px;width:1153px;height:16px;background:#f5f5f5"></div>

<div class="abs shead" style="left:13px;top:243px;width:1153px;height:27px"><span class="stitle">Layonara NWN West Server Status</span><span class="collapse abs"><svg width="10" height="10" viewBox="0 0 10 10" style="display:block"><path d="M2 8.300L5 1.800L8 8.300" fill="none" stroke="#000" stroke-width="2" stroke-linejoin="miter"/></svg></span></div>
<div class="abs sbody" style="left:13px;top:270px;width:1153px;height:305px;background:#d9dee2"></div>
<div class="abs subhead" style="left:20px;top:276px;width:1139px;height:23px"><span style="letter-spacing:-0.057px">Players Online: 11 <b style="font-size:14px;line-height:0;vertical-align:-1.5px;letter-spacing:0;margin-right:2px">•</b>Uptime: 21:44:47 <b style="font-size:14px;line-height:0;vertical-align:-1.5px;letter-spacing:0;margin-right:2px">•</b>Level Average: 16</span></div>
<div class="tbl abs" style="left:31px;top:315px;width:1116px;height:253px">
<div class="th abs" style="left:1px;top:1px;width:208px;letter-spacing:0.542px">Player Name</div>
<div class="th abs" style="left:210px;top:1px;width:253px;letter-spacing:0.581px">Character Name</div>
<div class="th abs" style="left:464px;top:1px;width:81px;letter-spacing:0.61px">Level</div>
<div class="th abs" style="left:546px;top:1px;width:94px;letter-spacing:0.235px">Race</div>
<div class="th abs" style="left:641px;top:1px;width:118px;letter-spacing:0.442px">Subrace</div>
<div class="th abs" style="left:760px;top:1px;width:113px;letter-spacing:0.409px">Class 1</div>
<div class="th abs" style="left:874px;top:1px;width:105px;letter-spacing:0.409px">Class 2</div>
<div class="th abs" style="left:980px;top:1px;width:135px;letter-spacing:0.493px">Class 3</div>
<div class="td a1 abs" style="left:1px;top:22px;width:208px"><a style="letter-spacing:0.154px">Aerimor</a></div>
<div class="td a2 abs" style="left:210px;top:22px;width:253px"><a style="letter-spacing:0.294px">Aerimor Lightbringer</a></div>
<div class="td a1 abs" style="left:464px;top:22px;width:81px"><span style="letter-spacing:0.641px">6</span></div>
<div class="td a2 abs" style="left:546px;top:22px;width:94px"><span style="letter-spacing:0.422px">Elf</span></div>
<div class="td a1 abs" style="left:641px;top:22px;width:118px"><span style="letter-spacing:0.508px">sunelf</span></div>
<div class="td a2 abs" style="left:760px;top:22px;width:113px"><span style="letter-spacing:0.547px">Druid</span></div>
<div class="td a1 abs" style="left:874px;top:22px;width:105px"></div>
<div class="td a2 abs" style="left:980px;top:22px;width:135px"></div>
<div class="td a1 abs" style="left:1px;top:43px;width:208px"><a style="letter-spacing:0.479px">cbnicholson</a></div>
<div class="td a2 abs" style="left:210px;top:43px;width:253px"><a style="letter-spacing:0.441px">Benjamin Poetr</a></div>
<div class="td a1 abs" style="left:464px;top:43px;width:81px"><span style="letter-spacing:0.633px">13</span></div>
<div class="td a2 abs" style="left:546px;top:43px;width:94px"><span style="letter-spacing:0.204px">Human</span></div>
<div class="td a1 abs" style="left:641px;top:43px;width:118px"></div>
<div class="td a2 abs" style="left:760px;top:43px;width:113px"><span style="letter-spacing:0.631px">Rogue</span></div>
<div class="td a1 abs" style="left:874px;top:43px;width:105px"><span style="letter-spacing:0.496px">Fighter</span></div>
<div class="td a2 abs" style="left:980px;top:43px;width:135px"></div>
<div class="td a1 abs" style="left:1px;top:64px;width:208px"><a style="letter-spacing:0.364px">Erin Inman</a></div>
<div class="td a2 abs" style="left:210px;top:64px;width:253px"><a style="letter-spacing:0.251px">Alatriel</a></div>
<div class="td a1 abs" style="left:464px;top:64px;width:81px"><span style="letter-spacing:0.641px">5</span></div>
<div class="td a2 abs" style="left:546px;top:64px;width:94px"><span style="letter-spacing:0.422px">Elf</span></div>
<div class="td a1 abs" style="left:641px;top:64px;width:118px"><span style="letter-spacing:0.487px">Wildelf</span></div>
<div class="td a2 abs" style="left:760px;top:64px;width:113px"><span style="letter-spacing:0.631px">Rogue</span></div>
<div class="td a1 abs" style="left:874px;top:64px;width:105px"></div>
<div class="td a2 abs" style="left:980px;top:64px;width:135px"></div>
<div class="td a1 abs" style="left:1px;top:85px;width:208px"><a style="letter-spacing:0.835px">Lareth_Vathach</a></div>
<div class="td a2 abs" style="left:210px;top:85px;width:253px"><a style="letter-spacing:0.777px">Lareth Vathach</a></div>
<div class="td a1 abs" style="left:464px;top:85px;width:81px"><span style="letter-spacing:0.633px">14</span></div>
<div class="td a2 abs" style="left:546px;top:85px;width:94px"><span style="letter-spacing:0.204px">Human</span></div>
<div class="td a1 abs" style="left:641px;top:85px;width:118px"></div>
<div class="td a2 abs" style="left:760px;top:85px;width:113px"><span style="letter-spacing:0.568px">Wizard</span></div>
<div class="td a1 abs" style="left:874px;top:85px;width:105px"></div>
<div class="td a2 abs" style="left:980px;top:85px;width:135px"></div>
<div class="td a1 abs" style="left:1px;top:106px;width:208px"><a style="letter-spacing:0.258px">Merlin34baseball</a></div>
<div class="td a2 abs" style="left:210px;top:106px;width:253px"><a style="letter-spacing:0.395px">Tyrian Baldu'muur</a></div>
<div class="td a1 abs" style="left:464px;top:106px;width:81px"><span style="letter-spacing:0.633px">19</span></div>
<div class="td a2 abs" style="left:546px;top:106px;width:94px"><span style="letter-spacing:0.447px">Half Elf</span></div>
<div class="td a1 abs" style="left:641px;top:106px;width:118px"></div>
<div class="td a2 abs" style="left:760px;top:106px;width:113px"><span style="letter-spacing:0.631px">Rogue</span></div>
<div class="td a1 abs" style="left:874px;top:106px;width:105px"><span style="letter-spacing:0.568px">Wizard</span></div>
<div class="td a2 abs" style="left:980px;top:106px;width:135px"></div>
<div class="td a1 abs" style="left:1px;top:127px;width:208px"><a style="letter-spacing:0.324px">Pibemanden</a></div>
<div class="td a2 abs" style="left:210px;top:127px;width:253px"><a style="letter-spacing:0.639px">Storold Doesscha</a></div>
<div class="td a1 abs" style="left:464px;top:127px;width:81px"><span style="letter-spacing:0.633px">33</span></div>
<div class="td a2 abs" style="left:546px;top:127px;width:94px"><span style="letter-spacing:0.204px">Human</span></div>
<div class="td a1 abs" style="left:641px;top:127px;width:118px"></div>
<div class="td a2 abs" style="left:760px;top:127px;width:113px"><span style="letter-spacing:0.568px">Wizard</span></div>
<div class="td a1 abs" style="left:874px;top:127px;width:105px"><span style="letter-spacing:0.516px">Paladin</span></div>
<div class="td a2 abs" style="left:980px;top:127px;width:135px"><span style="letter-spacing:0.541px">Spellsword</span></div>
<div class="td a1 abs" style="left:1px;top:148px;width:208px"><a style="letter-spacing:0.312px">Rain Darus</a></div>
<div class="td a2 abs" style="left:210px;top:148px;width:253px"><a style="letter-spacing:0.338px">Lex'or Gravedigger</a></div>
<div class="td a1 abs" style="left:464px;top:148px;width:81px"><span style="letter-spacing:0.633px">19</span></div>
<div class="td a2 abs" style="left:546px;top:148px;width:94px"><span style="letter-spacing:0.204px">Human</span></div>
<div class="td a1 abs" style="left:641px;top:148px;width:118px"></div>
<div class="td a2 abs" style="left:760px;top:148px;width:113px"><span style="letter-spacing:0.471px">Cleric</span></div>
<div class="td a1 abs" style="left:874px;top:148px;width:105px"></div>
<div class="td a2 abs" style="left:980px;top:148px;width:135px"></div>
<div class="td a1 abs" style="left:1px;top:169px;width:208px"><a style="letter-spacing:0.312px">Rain Darus</a></div>
<div class="td a2 abs" style="left:210px;top:169px;width:253px"><a style="letter-spacing:0.294px">Aerimor Lightbringer</a></div>
<div class="td a1 abs" style="left:464px;top:169px;width:81px"><span style="letter-spacing:0.641px">6</span></div>
<div class="td a2 abs" style="left:546px;top:169px;width:94px"><span style="letter-spacing:0.422px">Elf</span></div>
<div class="td a1 abs" style="left:641px;top:169px;width:118px"><span style="letter-spacing:0.508px">sunelf</span></div>
<div class="td a2 abs" style="left:760px;top:169px;width:113px"><span style="letter-spacing:0.547px">Druid</span></div>
<div class="td a1 abs" style="left:874px;top:169px;width:105px"></div>
<div class="td a2 abs" style="left:980px;top:169px;width:135px"></div>
<div class="td a1 abs" style="left:1px;top:190px;width:208px"><a style="letter-spacing:0.504px">Serissa1</a></div>
<div class="td a2 abs" style="left:210px;top:190px;width:253px"><a style="letter-spacing:0.49px">Sala Stonehill</a></div>
<div class="td a1 abs" style="left:464px;top:190px;width:81px"><span style="letter-spacing:0.633px">21</span></div>
<div class="td a2 abs" style="left:546px;top:190px;width:94px"><span style="letter-spacing:0.204px">Human</span></div>
<div class="td a1 abs" style="left:641px;top:190px;width:118px"></div>
<div class="td a2 abs" style="left:760px;top:190px;width:113px"><span style="letter-spacing:0.471px">Cleric</span></div>
<div class="td a1 abs" style="left:874px;top:190px;width:105px"></div>
<div class="td a2 abs" style="left:980px;top:190px;width:135px"></div>
<div class="td a1 abs" style="left:1px;top:211px;width:208px"><a style="letter-spacing:0.905px">Slithy Tove</a></div>
<div class="td a2 abs" style="left:210px;top:211px;width:253px"><a style="letter-spacing:0.633px">Jako Stonehill</a></div>
<div class="td a1 abs" style="left:464px;top:211px;width:81px"><span style="letter-spacing:0.633px">18</span></div>
<div class="td a2 abs" style="left:546px;top:211px;width:94px"><span style="letter-spacing:0.204px">Human</span></div>
<div class="td a1 abs" style="left:641px;top:211px;width:118px"></div>
<div class="td a2 abs" style="left:760px;top:211px;width:113px"><span style="letter-spacing:0.496px">Fighter</span></div>
<div class="td a1 abs" style="left:874px;top:211px;width:105px"></div>
<div class="td a2 abs" style="left:980px;top:211px;width:135px"></div>
<div class="td a1 abs" style="left:1px;top:232px;width:208px"><a style="letter-spacing:0.677px">ystrday</a></div>
<div class="td a2 abs" style="left:210px;top:232px;width:253px"><a style="letter-spacing:1.09px">Tegan</a></div>
<div class="td a1 abs" style="left:464px;top:232px;width:81px"><span style="letter-spacing:0.633px">26</span></div>
<div class="td a2 abs" style="left:546px;top:232px;width:94px"><span style="letter-spacing:0.447px">Half Elf</span></div>
<div class="td a1 abs" style="left:641px;top:232px;width:118px"></div>
<div class="td a2 abs" style="left:760px;top:232px;width:113px"><span style="letter-spacing:0.525px">Sorcerer</span></div>
<div class="td a1 abs" style="left:874px;top:232px;width:105px"></div>
<div class="td a2 abs" style="left:980px;top:232px;width:135px"></div>
</div>


<div class="abs shead" style="left:13px;top:581px;width:1153px;height:27px"><span class="stitle">Layonara NWN Central Server Status</span><span class="collapse abs"><svg width="10" height="10" viewBox="0 0 10 10" style="display:block"><path d="M2 8.300L5 1.800L8 8.300" fill="none" stroke="#000" stroke-width="2" stroke-linejoin="miter"/></svg></span></div>
<div class="abs sbody" style="left:13px;top:608px;width:1153px;height:284px;background:#f5f5f5"></div>
<div class="abs subhead" style="left:20px;top:614px;width:1139px;height:23px"><span style="letter-spacing:-0.057px">Players Online: 10 <b style="font-size:14px;line-height:0;vertical-align:-1.5px;letter-spacing:0;margin-right:2px">•</b>Uptime: 00:59:25 <b style="font-size:14px;line-height:0;vertical-align:-1.5px;letter-spacing:0;margin-right:2px">•</b>Level Average: 21</span></div>
<div class="tbl abs" style="left:31px;top:653px;width:1116px;height:232px">
<div class="th abs" style="left:1px;top:1px;width:212px;letter-spacing:0.542px">Player Name</div>
<div class="th abs" style="left:214px;top:1px;width:224px;letter-spacing:0.581px">Character Name</div>
<div class="th abs" style="left:439px;top:1px;width:73px;letter-spacing:0.61px">Level</div>
<div class="th abs" style="left:513px;top:1px;width:96px;letter-spacing:0.235px">Race</div>
<div class="th abs" style="left:610px;top:1px;width:106px;letter-spacing:0.442px">Subrace</div>
<div class="th abs" style="left:717px;top:1px;width:95px;letter-spacing:0.409px">Class 1</div>
<div class="th abs" style="left:813px;top:1px;width:180px;letter-spacing:0.409px">Class 2</div>
<div class="th abs" style="left:994px;top:1px;width:121px;letter-spacing:0.493px">Class 3</div>
<div class="td a1 abs" style="left:1px;top:22px;width:212px"><a style="letter-spacing:0.073px">Dalila08</a></div>
<div class="td a2 abs" style="left:214px;top:22px;width:224px"><a style="letter-spacing:0.282px">Rose Blair</a></div>
<div class="td a1 abs" style="left:439px;top:22px;width:73px"><span style="letter-spacing:0.633px">26</span></div>
<div class="td a2 abs" style="left:513px;top:22px;width:96px"><span style="letter-spacing:0.204px">Human</span></div>
<div class="td a1 abs" style="left:610px;top:22px;width:106px"><span style="letter-spacing:0.585px">Aasimar</span></div>
<div class="td a2 abs" style="left:717px;top:22px;width:95px"><span style="letter-spacing:0.471px">Cleric</span></div>
<div class="td a1 abs" style="left:813px;top:22px;width:180px"></div>
<div class="td a2 abs" style="left:994px;top:22px;width:121px"></div>
<div class="td a1 abs" style="left:1px;top:43px;width:212px"><a style="letter-spacing:0.582px">Filatus</a></div>
<div class="td a2 abs" style="left:214px;top:43px;width:224px"><a style="letter-spacing:0.308px">Hardragh</a></div>
<div class="td a1 abs" style="left:439px;top:43px;width:73px"><span style="letter-spacing:0.633px">25</span></div>
<div class="td a2 abs" style="left:513px;top:43px;width:96px"><span style="letter-spacing:0.204px">Human</span></div>
<div class="td a1 abs" style="left:610px;top:43px;width:106px"></div>
<div class="td a2 abs" style="left:717px;top:43px;width:95px"><span style="letter-spacing:0.582px">Bard</span></div>
<div class="td a1 abs" style="left:813px;top:43px;width:180px"><span style="letter-spacing:0.496px">Fighter</span></div>
<div class="td a2 abs" style="left:994px;top:43px;width:121px"><span style="letter-spacing:0.544px">Skald</span></div>
<div class="td a1 abs" style="left:1px;top:64px;width:212px"><a style="letter-spacing:0.344px">Goldwin Blacknight</a></div>
<div class="td a2 abs" style="left:214px;top:64px;width:224px"><a style="letter-spacing:0.344px">Goldwin Blacknight</a></div>
<div class="td a1 abs" style="left:439px;top:64px;width:73px"><span style="letter-spacing:0.633px">29</span></div>
<div class="td a2 abs" style="left:513px;top:64px;width:96px"><span style="letter-spacing:0.204px">Human</span></div>
<div class="td a1 abs" style="left:610px;top:64px;width:106px"></div>
<div class="td a2 abs" style="left:717px;top:64px;width:95px"><span style="letter-spacing:0.496px">Fighter</span></div>
<div class="td a1 abs" style="left:813px;top:64px;width:180px"><span style="letter-spacing:0.631px">Rogue</span></div>
<div class="td a2 abs" style="left:994px;top:64px;width:121px"></div>
<div class="td a1 abs" style="left:1px;top:85px;width:212px"><a style="letter-spacing:0.469px">Lalaith Va'lash</a></div>
<div class="td a2 abs" style="left:214px;top:85px;width:224px"><a style="letter-spacing:0.028px">Kali</a></div>
<div class="td a1 abs" style="left:439px;top:85px;width:73px"><span style="letter-spacing:0.633px">16</span></div>
<div class="td a2 abs" style="left:513px;top:85px;width:96px"><span style="letter-spacing:0.422px">Elf</span></div>
<div class="td a1 abs" style="left:610px;top:85px;width:106px"></div>
<div class="td a2 abs" style="left:717px;top:85px;width:95px"><span style="letter-spacing:0.631px">Rogue</span></div>
<div class="td a1 abs" style="left:813px;top:85px;width:180px"><span style="letter-spacing:0.582px">Bard</span></div>
<div class="td a2 abs" style="left:994px;top:85px;width:121px"></div>
<div class="td a1 abs" style="left:1px;top:106px;width:212px"><a style="letter-spacing:0.624px">Pen N Popper</a></div>
<div class="td a2 abs" style="left:214px;top:106px;width:224px"><a style="letter-spacing:0.15px">Bumblebee</a></div>
<div class="td a1 abs" style="left:439px;top:106px;width:73px"><span style="letter-spacing:0.633px">17</span></div>
<div class="td a2 abs" style="left:513px;top:106px;width:96px"><span style="letter-spacing:0.479px">Halfling</span></div>
<div class="td a1 abs" style="left:610px;top:106px;width:106px"><span style="letter-spacing:0.576px">Brownie</span></div>
<div class="td a2 abs" style="left:717px;top:106px;width:95px"><span style="letter-spacing:0.631px">Rogue</span></div>
<div class="td a1 abs" style="left:813px;top:106px;width:180px"><span style="letter-spacing:0.617px">Shadowdancer</span></div>
<div class="td a2 abs" style="left:994px;top:106px;width:121px"></div>
<div class="td a1 abs" style="left:1px;top:127px;width:212px"><a style="letter-spacing:0.329px">scifibarbie</a></div>
<div class="td a2 abs" style="left:214px;top:127px;width:224px"><a style="letter-spacing:0.49px">Abigail Firesteed</a></div>
<div class="td a1 abs" style="left:439px;top:127px;width:73px"><span style="letter-spacing:0.633px">16</span></div>
<div class="td a2 abs" style="left:513px;top:127px;width:96px"><span style="letter-spacing:0.204px">Human</span></div>
<div class="td a1 abs" style="left:610px;top:127px;width:106px"></div>
<div class="td a2 abs" style="left:717px;top:127px;width:95px"><span style="letter-spacing:0.599px">Ranger</span></div>
<div class="td a1 abs" style="left:813px;top:127px;width:180px"><span style="letter-spacing:0.525px">Sorcerer</span></div>
<div class="td a2 abs" style="left:994px;top:127px;width:121px"><span style="letter-spacing:0.541px">Spellsword</span></div>
<div class="td a1 abs" style="left:1px;top:148px;width:212px"><a style="letter-spacing:0.462px">setrius</a></div>
<div class="td a2 abs" style="left:214px;top:148px;width:224px"><a style="letter-spacing:0.384px">Gravas Hrendhamer</a></div>
<div class="td a1 abs" style="left:439px;top:148px;width:73px"><span style="letter-spacing:0.633px">28</span></div>
<div class="td a2 abs" style="left:513px;top:148px;width:96px"><span style="letter-spacing:0.591px">Dwarf</span></div>
<div class="td a1 abs" style="left:610px;top:148px;width:106px"></div>
<div class="td a2 abs" style="left:717px;top:148px;width:95px"><span style="letter-spacing:0.496px">Fighter</span></div>
<div class="td a1 abs" style="left:813px;top:148px;width:180px"><span style="letter-spacing:0.631px">Rogue</span></div>
<div class="td a2 abs" style="left:994px;top:148px;width:121px"></div>
<div class="td a1 abs" style="left:1px;top:169px;width:212px"><a style="letter-spacing:0.389px">ShivaD</a></div>
<div class="td a2 abs" style="left:214px;top:169px;width:224px"><a style="letter-spacing:-0.006px">G'ork</a></div>
<div class="td a1 abs" style="left:439px;top:169px;width:73px"><span style="letter-spacing:0.633px">20</span></div>
<div class="td a2 abs" style="left:513px;top:169px;width:96px"><span style="letter-spacing:0.506px">Half Orc</span></div>
<div class="td a1 abs" style="left:610px;top:169px;width:106px"></div>
<div class="td a2 abs" style="left:717px;top:169px;width:95px"><span style="letter-spacing:0.496px">Fighter</span></div>
<div class="td a1 abs" style="left:813px;top:169px;width:180px"><span style="letter-spacing:0.597px">Weapon Master</span></div>
<div class="td a2 abs" style="left:994px;top:169px;width:121px"></div>
<div class="td a1 abs" style="left:1px;top:190px;width:212px"><a style="letter-spacing:0.352px">SilverClawD</a></div>
<div class="td a2 abs" style="left:214px;top:190px;width:224px"><a style="letter-spacing:0.318px">Caighd Brendimeere</a></div>
<div class="td a1 abs" style="left:439px;top:190px;width:73px"><span style="letter-spacing:0.633px">14</span></div>
<div class="td a2 abs" style="left:513px;top:190px;width:96px"><span style="letter-spacing:0.204px">Human</span></div>
<div class="td a1 abs" style="left:610px;top:190px;width:106px"></div>
<div class="td a2 abs" style="left:717px;top:190px;width:95px"><span style="letter-spacing:0.516px">Paladin</span></div>
<div class="td a1 abs" style="left:813px;top:190px;width:180px"></div>
<div class="td a2 abs" style="left:994px;top:190px;width:121px"></div>
<div class="td a1 abs" style="left:1px;top:211px;width:212px"><a style="letter-spacing:0.687px">Tobias0720</a></div>
<div class="td a2 abs" style="left:214px;top:211px;width:224px"><a style="letter-spacing:0.899px">Tobias</a></div>
<div class="td a1 abs" style="left:439px;top:211px;width:73px"><span style="letter-spacing:0.633px">26</span></div>
<div class="td a2 abs" style="left:513px;top:211px;width:96px"><span style="letter-spacing:0.422px">Elf</span></div>
<div class="td a1 abs" style="left:610px;top:211px;width:106px"></div>
<div class="td a2 abs" style="left:717px;top:211px;width:95px"><span style="letter-spacing:0.631px">Rogue</span></div>
<div class="td a1 abs" style="left:813px;top:211px;width:180px"><span style="letter-spacing:0.496px">Fighter</span></div>
<div class="td a2 abs" style="left:994px;top:211px;width:121px"><span style="letter-spacing:0.498px">Duelist</span></div>
</div>


<svg class="abs" style="left:0;top:0" width="1262" height="893" viewBox="0 105 1262 893">
<g fill="none" stroke="#f7ea3c" stroke-width="14" stroke-linecap="round" stroke-linejoin="round">
<path d="M432 421 L394 452 L435 487 M393 452.500 L473 452.500"/>
<path d="M378 540 L386.500 577 M419.500 536 L391 567 M428 567 L399 577 M430 581 L400 589 M393 595 L469.500 596 M400 604 L437 626 M386 572 L397 596 M404 574 L422 588 M396 585 L402 606"/>
</g></svg>

</div>
<i class="abs" style="left:0;top:997px;width:1262px;height:1px;background:#181818"></i>
<div id="status" class="abs"><i class="abs" style="left:0;top:2px;width:1275px;height:1px;background:#808080"></i><span class="ui abs" style="left:4px;top:5px;line-height:13px">Done</span><i class="abs" style="left:1275px;top:2px;width:1px;height:19px;background:#fff"></i></div>
<div id="scroll" class="abs">
<div class="sbtn abs" style="top:0"><svg class="abs" style="left:3px;top:5px" width="7" height="4" viewBox="0 0 7 4" shape-rendering="crispEdges"><path d="M3 0h1v1h1v1h1v1h1v1h-7v-1h1v-1h1v-1h1z" fill="#000"/></svg></div>
<div class="thumb abs" style="top:100px;height:645px"></div>
<div class="sbtn abs" style="top:877px"><svg class="abs" style="left:3px;top:5px" width="7" height="4" viewBox="0 0 7 4" shape-rendering="crispEdges"><path d="M0 0h7v1h-1v1h-1v1h-1v1h-1v-1h-1v-1h-1v-1h-1z" fill="#000"/></svg></div>
</div>
</body></html>
